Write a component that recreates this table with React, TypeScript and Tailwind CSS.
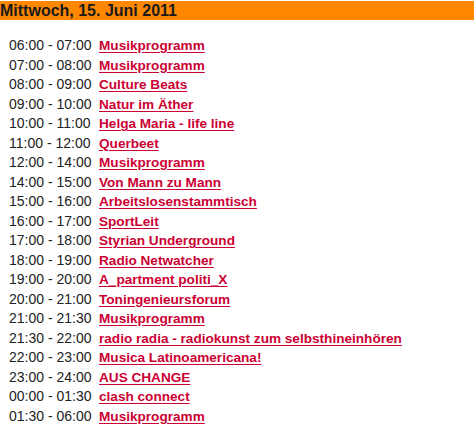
import React from 'react';

const rows: [string, string][] = [
    ["06:00 - 07:00", "Musikprogramm"],
    ["07:00 - 08:00", "Musikprogramm"],
    ["08:00 - 09:00", "Culture Beats"],
    ["09:00 - 10:00", "Natur im Äther"],
    ["10:00 - 11:00", "Helga Maria - life line"],
    ["11:00 - 12:00", "Querbeet"],
    ["12:00 - 14:00", "Musikprogramm"],
    ["14:00 - 15:00", "Von Mann zu Mann"],
    ["15:00 - 16:00", "Arbeitslosenstammtisch"],
    ["16:00 - 17:00", "SportLeit"],
    ["17:00 - 18:00", "Styrian Underground"],
    ["18:00 - 19:00", "Radio Netwatcher"],
    ["19:00 - 20:00", "A_partment politi_X"],
    ["20:00 - 21:00", "Toningenieursforum"],
    ["21:00 - 21:30", "Musikprogramm"],
    ["21:30 - 22:00", "radio radia - radiokunst zum selbsthineinhören"],
    ["22:00 - 23:00", "Musica Latinoamericana!"],
    ["23:00 - 24:00", "AUS CHANGE"],
    ["00:00 - 01:30", "clash connect"],
    ["01:30 - 06:00", "Musikprogramm"],
];

const App = () => {
    return (
        <div className="w-[474px] h-[430px] bg-white overflow-hidden" style={{fontFamily: '"Liberation Sans", Arial, sans-serif'}}>
            <h2 className="mt-px h-[19px] bg-[#ff8800] text-[16px] leading-[19px] font-bold text-[#1a1a1a]">
                Mittwoch, 15. Juni 2011
            </h2>
            <div className="pt-[16px] pl-[9px]">
                {rows.map(([time, title], i) => (
                    <div key={i} className="flex items-baseline h-[19.5px] leading-[19.5px]">
                        <span className="w-[90px] text-[14px] text-[#222]">{time}</span>
                        <a href="#" className="text-[13.6px] font-bold text-[#cc0033] underline underline-offset-2">{title}</a>
                    </div>
                ))}
            </div>
        </div>
    );
};

export default App;
